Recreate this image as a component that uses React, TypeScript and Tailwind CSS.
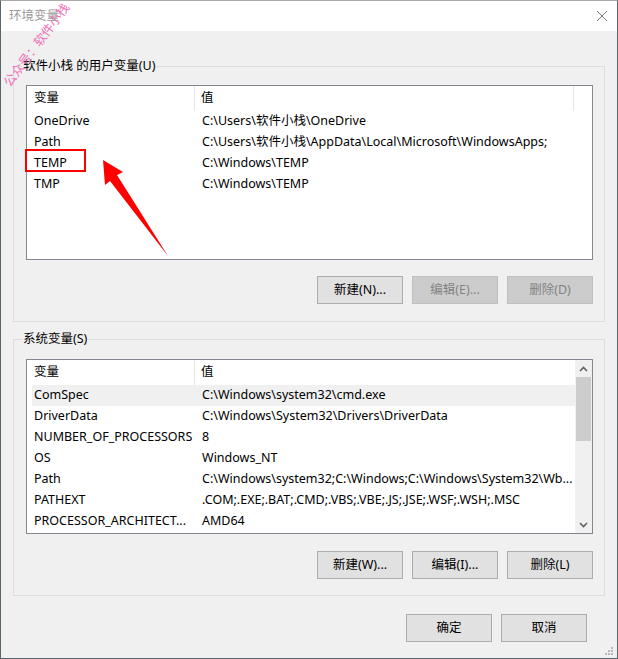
import React from "react";

type Row = { name: string; value: string; hl?: boolean };

const userRows: Row[] = [
  { name: "OneDrive", value: "C:\\Users\\软件小栈\\OneDrive" },
  { name: "Path", value: "C:\\Users\\软件小栈\\AppData\\Local\\Microsoft\\WindowsApps;" },
  { name: "TEMP", value: "C:\\Windows\\TEMP" },
  { name: "TMP", value: "C:\\Windows\\TEMP" },
];

const sysRows: Row[] = [
  { name: "ComSpec", value: "C:\\Windows\\system32\\cmd.exe", hl: true },
  { name: "DriverData", value: "C:\\Windows\\System32\\Drivers\\DriverData" },
  { name: "NUMBER_OF_PROCESSORS", value: "8" },
  { name: "OS", value: "Windows_NT" },
  { name: "Path", value: "C:\\Windows\\system32;C:\\Windows;C:\\Windows\\System32\\Wb..." },
  { name: "PATHEXT", value: ".COM;.EXE;.BAT;.CMD;.VBS;.VBE;.JS;.JSE;.WSF;.WSH;.MSC" },
  { name: "PROCESSOR_ARCHITECT...", value: "AMD64" },
];

function Btn({ label, disabled }: { label: string; disabled?: boolean }) {
  return (
    <div
      className={
        "w-[86px] h-[28px] flex items-center justify-center border " +
        (disabled
          ? "bg-[#cccccc] border-[#bfbfbf] text-[#838383]"
          : "bg-[#e1e1e1] border-[#adadad] text-black")
      }
    >
      {label}
    </div>
  );
}

function Header({ endLine }: { endLine: boolean }) {
  return (
    <div className="flex h-[25px] items-stretch">
      <div className="w-[163px] pl-[2px] flex items-center border-r border-[#e5e5e5]">变量</div>
      <div
        className={
          "flex-1 pl-[6px] flex items-center " + (endLine ? "border-r border-[#e5e5e5]" : "")
        }
      >
        值
      </div>
    </div>
  );
}

function Rows({ rows }: { rows: Row[] }) {
  return (
    <>
      {rows.map((r, i) => (
        <div key={i} className={"flex h-[21px] items-center " + (r.hl ? "bg-[#f0f0f0]" : "")}>
          <div className="w-[164px] pl-[2px] whitespace-nowrap overflow-hidden">{r.name}</div>
          <div className="flex-1 pl-[6px] whitespace-nowrap overflow-hidden">{r.value}</div>
        </div>
      ))}
    </>
  );
}

function Group({ label, pad, children }: { label: string; pad: string; children: React.ReactNode }) {
  return (
    <div className={"relative border border-[#dcdcdc] w-[592px] pl-[12px] pr-[11px] " + pad}>
      <span className="absolute left-[8px] top-[-9px] px-[1px] bg-[#f0f0f0] leading-[16px]">{label}</span>
      {children}
    </div>
  );
}

export default function App() {
  return (
    <div className="relative w-[618px] h-[659px] overflow-hidden border-t border-t-[#a9a9a9] border-x border-b border-x-[#59656e] border-b-[#59656e] bg-[#f0f0f0] text-[12.5px] text-black font-['Noto_Sans','Noto_Sans_CJK_SC',sans-serif] flex flex-col">
      {/* title bar */}
      <div className="h-[30px] bg-white flex items-center justify-between pl-[8px] pr-[9px]">
        <span className="text-[#999999] text-[12.5px]">环境变量</span>
        <svg width="12" height="12" viewBox="0 0 12 12">
          <path d="M1 1 L11 11 M11 1 L1 11" stroke="#7a7a7a" strokeWidth="1" fill="none" />
        </svg>
      </div>

      <div className="flex flex-col pl-[12px] pt-[35px]">
        <Group label="软件小栈 的用户变量(U)" pad="pt-[18px] pb-[17px]">
          <div className="border border-[#828790] bg-white h-[175px] w-[567px] pl-[5px] flex flex-col">
            <div className="w-[542px]">
              <Header endLine={true} />
              <Rows rows={userRows} />
            </div>
          </div>
          <div className="flex justify-end gap-[9px] mt-[16px]">
            <Btn label="新建(N)..." />
            <Btn label="编辑(E)..." disabled />
            <Btn label="删除(D)" disabled />
          </div>
        </Group>

        <div className="h-[17px]" />

        <Group label="系统变量(S)" pad="pt-[19px] pb-[16px]">
          <div className="border border-[#828790] bg-white h-[175px] w-[567px] flex">
            <div className="flex-1 pl-[5px] flex flex-col">
              <Header endLine={false} />
              <Rows rows={sysRows} />
            </div>
            <div className="w-[17px] bg-[#f0f0f0] flex flex-col">
              <div className="h-[17px] flex items-center justify-center">
                <svg width="9" height="6" viewBox="0 0 9 6">
                  <path d="M1 5 L4.5 1.5 L8 5" stroke="#606060" strokeWidth="1.6" fill="none" />
                </svg>
              </div>
              <div className="mx-[1px] h-[64px] bg-[#cdcdcd]" />
              <div className="flex-1" />
              <div className="h-[17px] flex items-center justify-center">
                <svg width="9" height="6" viewBox="0 0 9 6">
                  <path d="M1 1 L4.5 4.5 L8 1" stroke="#606060" strokeWidth="1.6" fill="none" />
                </svg>
              </div>
            </div>
          </div>
          <div className="flex justify-end gap-[9px] mt-[17px]">
            <Btn label="新建(W)..." />
            <Btn label="编辑(I)..." />
            <Btn label="删除(L)" />
          </div>
        </Group>

        <div className="flex justify-end gap-[9px] mt-[18px] pr-[30px]">
          <Btn label="确定" />
          <Btn label="取消" />
        </div>
      </div>

      {/* resize grip */}
      <svg className="absolute right-[3px] bottom-[2px]" width="10" height="10" viewBox="0 0 10 10">
        <rect x="7" y="1" width="2" height="2" fill="#b8b8b8" />
        <rect x="4" y="4" width="2" height="2" fill="#b8b8b8" />
        <rect x="7" y="4" width="2" height="2" fill="#b8b8b8" />
        <rect x="1" y="7" width="2" height="2" fill="#b8b8b8" />
        <rect x="4" y="7" width="2" height="2" fill="#b8b8b8" />
        <rect x="7" y="7" width="2" height="2" fill="#b8b8b8" />
      </svg>

      {/* annotation overlay */}
      <svg className="absolute left-[-1px] top-[-1px] pointer-events-none" width="618" height="659" viewBox="0 0 618 659">
        <rect x="26" y="150" width="59" height="21" fill="none" stroke="#ff0000" strokeWidth="2" />
        <polygon points="103,160 123,172 117,175 168,256 110,181 105,185" fill="#ff0000" />
      </svg>

      <span className="absolute left-[-14px] top-[38px] w-[100px] text-center -rotate-[53deg] text-[12.5px] text-[#f06eb8] whitespace-nowrap leading-none">
        公众号：软件小栈
      </span>
    </div>
  );
}
